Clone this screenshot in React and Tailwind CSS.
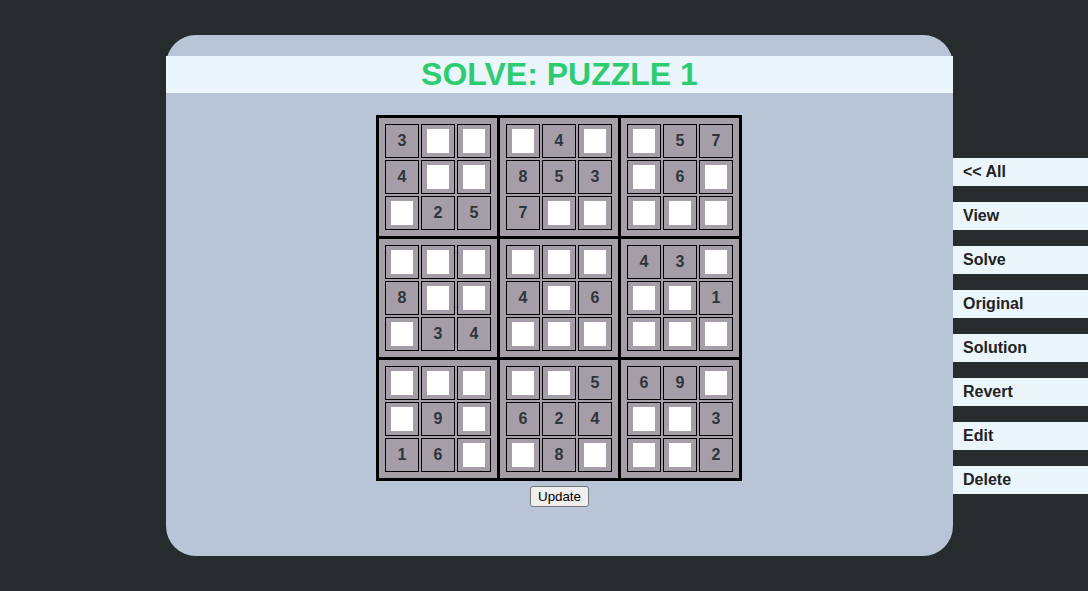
import React from "react";

const boxes = [
  ["3", "", "", "4", "", "", "", "2", "5"],
  ["", "4", "", "8", "5", "3", "7", "", ""],
  ["", "5", "7", "", "6", "", "", "", ""],
  ["", "", "", "8", "", "", "", "3", "4"],
  ["", "", "", "4", "", "6", "", "", ""],
  ["4", "3", "", "", "", "1", "", "", ""],
  ["", "", "", "", "9", "", "1", "6", ""],
  ["", "", "5", "6", "2", "4", "", "8", ""],
  ["6", "9", "", "", "", "3", "", "", "2"],
];

const menu = ["<< All", "View", "Solve", "Original", "Solution", "Revert", "Edit", "Delete"];

function Cell({ v }) {
  return (
    <div className="w-[34px] h-[34px] border border-black bg-[#a59ea9] flex items-center justify-center">
      {v ? (
        <span className="text-[16px] font-bold text-[#30353b] leading-none">{v}</span>
      ) : (
        <div className="w-[22px] h-[24px] bg-white" />
      )}
    </div>
  );
}

export default function App() {
  return (
    <div
      className="w-[1088px] h-[591px] bg-[#262c2e] flex items-start overflow-hidden"
      style={{ fontFamily: '"Liberation Sans", Arial, sans-serif' }}
    >
      <div className="ml-[166px] mt-[35px] w-[787px] h-[521px] bg-[#b8c5d6] rounded-[30px] flex flex-col items-center">
        <h1 className="mt-[21px] mb-[22px] w-full h-[37px] bg-[#ebf5fc] text-[32px] leading-[37px] font-bold text-[#2ecc71] text-center">
          SOLVE: PUZZLE 1
        </h1>
        <div className="mr-[1px] border-[3px] border-black bg-black grid grid-cols-3 gap-[3px]">
          {boxes.map((b, i) => (
            <div key={i} className="bg-[#a59ea9] p-[6px] grid grid-cols-3 gap-[2px]">
              {b.map((v, j) => (
                <Cell key={j} v={v} />
              ))}
            </div>
          ))}
        </div>
        <button className="mt-[5px] w-[59px] h-[21px] bg-[#efefef] border border-[#767676] rounded-[3px] text-[13.33px] text-black leading-none">
          Update
        </button>
      </div>
      <div className="mt-[158px] w-[135px] flex flex-col gap-[16px]">
        {menu.map((m) => (
          <div key={m} className="h-[28px] bg-[#ebf5fc] pl-[10px] flex items-center text-[16px] font-bold text-[#222]">
            {m}
          </div>
        ))}
      </div>
    </div>
  );
}
